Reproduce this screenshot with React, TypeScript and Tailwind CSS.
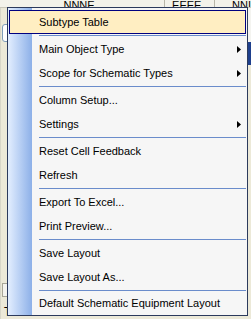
import React from "react";

type Item = { label: string; sub?: boolean; hl?: boolean };

const groups: Item[][] = [
  [{ label: "Subtype Table", hl: true }],
  [
    { label: "Main Object Type", sub: true },
    { label: "Scope for Schematic Types", sub: true },
  ],
  [{ label: "Column Setup..." }, { label: "Settings", sub: true }],
  [{ label: "Reset Cell Feedback" }, { label: "Refresh" }],
  [{ label: "Export To Excel..." }, { label: "Print Preview..." }],
  [{ label: "Save Layout" }, { label: "Save Layout As..." }],
  [{ label: "Default Schematic Equipment Layout" }],
];

function Arrow() {
  return (
    <svg width="4" height="7" viewBox="0 0 4 7" className="mr-[6px] shrink-0">
      <path d="M0 0 L4 3.5 L0 7 Z" fill="#000" />
    </svg>
  );
}

function Row({ item, last }: { item: Item; last?: boolean }) {
  return (
    <div className={`flex ${last ? "h-[23px]" : "h-[24px]"}`}>
      {item.hl ? (
        <div className="mx-[1px] flex flex-1 items-center border border-[#000080] bg-[#ffeec2] pl-[29px]">
          {item.label}
        </div>
      ) : (
        <>
          <div className="w-[24px] shrink-0" />
          <div className="flex flex-1 items-center pl-[7px]">{item.label}</div>
          {item.sub && (
            <div className="flex items-center">
              <Arrow />
            </div>
          )}
        </>
      )}
    </div>
  );
}

export default function App() {
  return (
    <div
      className="relative h-[319px] w-[251px] overflow-hidden bg-[#ece9d8] text-[11px] text-black"
      style={{ fontFamily: '"Liberation Sans", Arial, sans-serif' }}
    >
      {/* background grid (behind the menu) */}
      <div className="flex h-full flex-col">
        <div className="flex h-[8px] shrink-0 items-end overflow-hidden border-b border-[#c8c6b8] bg-[#f3f2ea] leading-[11px]">
          <div className="w-[65px]" />
          <div className="w-[103px] translate-y-[4px]">NNNE</div>
          <div className="h-full w-[1px] bg-[#b8b6a8]" />
          <div className="w-[50px] translate-y-[4px] pl-[7px]">EEEE</div>
          <div className="h-full w-[1px] bg-[#b8b6a8]" />
          <div className="flex-1 translate-y-[4px] pl-[17px]">NNI</div>
        </div>
        <div className="flex flex-1">
          <div className="flex w-[12px] flex-col border-l border-[#d8d6c8] pl-[1px]">
            <div className="h-[16px]" />
            <div className="h-[18px] w-[10px] rounded-[3px] border border-[#7f9db9] bg-white" />
            <div className="flex-1" />
            <div className="h-[14px] w-[10px] border border-[#a8a698] bg-[#f4f3ee]" />
            <div className="h-[9px]" />
            <div className="pl-[2px] text-[12px] leading-[13px]">T</div>
          </div>
          <div className="flex-1" />
          <div className="flex w-[3px] flex-col">
            <div className="h-[34px] bg-[#f4f4f0]" />
            <div className="h-[23px] bg-[#1e3f8c]" />
          </div>
        </div>
      </div>

      {/* menu overlay */}
      <div className="absolute left-[7px] top-[7px] w-[241px] border border-[#2c3a5c] bg-[#f6f6f6]">
        <div className="absolute bottom-0 left-0 top-0 w-[24px] bg-gradient-to-r from-[#e3eefe] to-[#8db0e8]" />
        <div className="relative flex flex-col pt-[2px]">
          {groups.map((g, gi) => (
            <React.Fragment key={gi}>
              {gi > 0 && (
                <div className="flex h-[3px] items-center">
                  <div className="ml-[31px] mr-[1px] h-[1px] flex-1 bg-[#6a8ccb]" />
                </div>
              )}
              {g.map((it, ii) => (
                <Row key={ii} item={it} last={gi === groups.length - 1} />
              ))}
            </React.Fragment>
          ))}
        </div>
      </div>
    </div>
  );
}
